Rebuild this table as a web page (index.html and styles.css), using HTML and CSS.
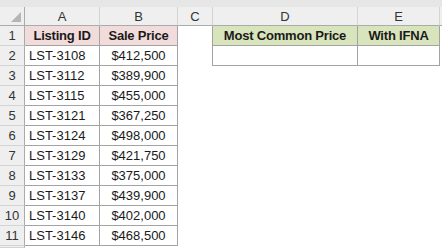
FILE: index.html
```html
<!DOCTYPE html>
<html>
<head>
<meta charset="utf-8">
<link rel="stylesheet" href="styles.css">
</head>
<body>
<div class="sheet">
  <div class="strip"></div>

  <div class="corner"><span class="tri"></span></div>
  <div class="ch">A</div>
  <div class="ch">B</div>
  <div class="ch">C</div>
  <div class="ch">D</div>
  <div class="ch">E</div>
  <div class="ch last"></div>

  <div class="rh">1</div>
  <div class="c b hd red">Listing ID</div>
  <div class="c b hd red">Sale Price</div>
  <div class="c cb"></div>
  <div class="c b hd green">Most Common Price</div>
  <div class="c b hd green">With IFNA</div>
  <div class="c"></div>

  <div class="rh">2</div>
  <div class="c b l">LST-3108</div>
  <div class="c b">$412,500</div>
  <div class="c cb"></div>
  <div class="c b"></div>
  <div class="c b"></div>
  <div class="c"></div>

  <div class="rh">3</div>
  <div class="c b l">LST-3112</div>
  <div class="c b">$389,900</div>
  <div class="c"></div><div class="c"></div><div class="c"></div><div class="c"></div>

  <div class="rh">4</div>
  <div class="c b l">LST-3115</div>
  <div class="c b">$455,000</div>
  <div class="c"></div><div class="c"></div><div class="c"></div><div class="c"></div>

  <div class="rh">5</div>
  <div class="c b l">LST-3121</div>
  <div class="c b">$367,250</div>
  <div class="c"></div><div class="c"></div><div class="c"></div><div class="c"></div>

  <div class="rh">6</div>
  <div class="c b l">LST-3124</div>
  <div class="c b">$498,000</div>
  <div class="c"></div><div class="c"></div><div class="c"></div><div class="c"></div>

  <div class="rh">7</div>
  <div class="c b l">LST-3129</div>
  <div class="c b">$421,750</div>
  <div class="c"></div><div class="c"></div><div class="c"></div><div class="c"></div>

  <div class="rh">8</div>
  <div class="c b l">LST-3133</div>
  <div class="c b">$375,000</div>
  <div class="c"></div><div class="c"></div><div class="c"></div><div class="c"></div>

  <div class="rh">9</div>
  <div class="c b l">LST-3137</div>
  <div class="c b">$439,900</div>
  <div class="c"></div><div class="c"></div><div class="c"></div><div class="c"></div>

  <div class="rh">10</div>
  <div class="c b l">LST-3140</div>
  <div class="c b">$402,000</div>
  <div class="c"></div><div class="c"></div><div class="c"></div><div class="c"></div>

  <div class="rh">11</div>
  <div class="c b l">LST-3146</div>
  <div class="c b">$468,500</div>
  <div class="c"></div><div class="c"></div><div class="c"></div><div class="c"></div>

  <div class="rh"></div>
  <div class="c"></div><div class="c"></div><div class="c"></div><div class="c"></div><div class="c"></div><div class="c"></div>
</div>
</body>
</html>
```
FILE: styles.css
```css
html, body {
  margin: 0;
  padding: 0;
  background: #ffffff;
}
body {
  width: 442px;
  height: 248px;
  overflow: hidden;
  font-family: "Liberation Sans", Arial, sans-serif;
  font-size: 13px;
  color: #1a1a1a;
}
.sheet {
  display: grid;
  grid-template-columns: 25px 75px 78px 35px 145px 82px 2px;
  grid-template-rows: 7px 19px repeat(11, 20px) 2px;
}
.strip {
  grid-column: 1 / -1;
  background: #e6e6e6;
}
.corner {
  background: #efefef;
  border-right: 1px solid #ababab;
  border-bottom: 1px solid #ababab;
  box-sizing: border-box;
  position: relative;
}
.tri {
  position: absolute;
  right: 3px;
  bottom: 3px;
  width: 0;
  height: 0;
  border-left: 10px solid transparent;
  border-bottom: 10px solid #b5b5b5;
}
.ch {
  background: #efefef;
  border-right: 1px solid #d4d4d4;
  border-bottom: 1px solid #ababab;
  box-sizing: border-box;
  display: flex;
  align-items: center;
  justify-content: center;
  color: #333333;
  line-height: 1;
}
.ch.last {
  border-right: none;
}
.rh {
  background: #efefef;
  border-right: 1px solid #ababab;
  border-bottom: 1px solid #d4d4d4;
  box-sizing: border-box;
  display: flex;
  align-items: center;
  justify-content: center;
  color: #333333;
  line-height: 1;
}
.c {
  box-sizing: border-box;
  display: flex;
  align-items: center;
  justify-content: center;
  white-space: nowrap;
  line-height: 1;
}
.b {
  border-right: 1px solid #a3a3a3;
  border-bottom: 1px solid #a3a3a3;
}
.cb {
  border-right: 1px solid #a3a3a3;
}
.l {
  justify-content: flex-start;
  padding-left: 4px;
}
.hd {
  font-weight: bold;
  letter-spacing: -0.2px;
}
.red {
  background: #f2dcdb;
}
.green {
  background: #d8e4bc;
}
```
